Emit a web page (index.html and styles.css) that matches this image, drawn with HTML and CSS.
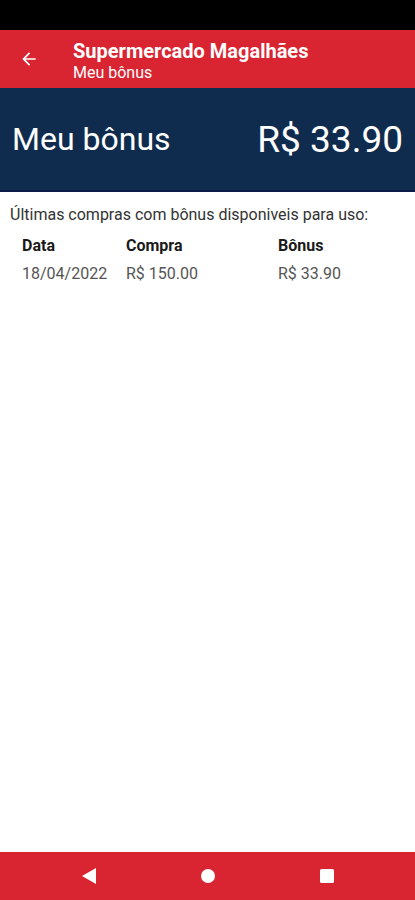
FILE: index.html
```html
<!DOCTYPE html>
<html lang="pt-BR">
<head>
    <meta charset="UTF-8">
    <meta name="viewport" content="width=device-width, initial-scale=1.0">
    <title>Meu bônus</title>
    <link rel="stylesheet" href="styles.css">
</head>
<body>
    <div class="status-bar"></div>

    <header class="app-bar">
        <button class="back-btn" aria-label="Voltar">
            <svg width="20" height="20" viewBox="0 0 24 24">
                <path d="M20 11H7.83l5.59-5.59L12 4l-8 8 8 8 1.41-1.41L7.83 13H20v-2z" fill="#fff"/>
            </svg>
        </button>
        <div class="titles">
            <div class="title">Supermercado Magalhães</div>
            <div class="subtitle">Meu bônus</div>
        </div>
    </header>

    <section class="bonus-banner">
        <span class="bonus-label">Meu bônus</span>
        <span class="bonus-value">R$ 33.90</span>
    </section>

    <main class="content">
        <p class="intro">Últimas compras com bônus disponiveis para uso:</p>
        <div class="purchases">
            <div class="cell head">Data</div>
            <div class="cell head">Compra</div>
            <div class="cell head">Bônus</div>
            <div class="cell">18/04/2022</div>
            <div class="cell">R$ 150.00</div>
            <div class="cell">R$ 33.90</div>
        </div>
    </main>

    <nav class="nav-bar">
        <svg width="16" height="18" viewBox="0 0 16 18"><path d="M15 1v16L1 9z" fill="#fff"/></svg>
        <svg width="16" height="16" viewBox="0 0 16 16"><circle cx="8" cy="8" r="7" fill="#fff"/></svg>
        <svg width="16" height="16" viewBox="0 0 16 16"><rect x="1" y="1" width="14" height="14" rx="1.5" fill="#fff"/></svg>
    </nav>
</body>
</html>
```

FILE: styles.css
```css
body {
    margin: 0;
    height: 100vh;
    display: flex;
    flex-direction: column;
    font-family: Roboto, "Liberation Sans", sans-serif;
    background-color: #fff;
}
.status-bar {
    height: 30px;
    background-color: #000;
}
.app-bar {
    height: 58px;
    background-color: #d92431;
    display: flex;
    align-items: center;
    color: #fff;
}
.back-btn {
    width: 58px;
    height: 58px;
    padding: 0;
    border: none;
    background: none;
    display: flex;
    align-items: center;
    justify-content: center;
}
.titles {
    margin-left: 15px;
    margin-top: 3px;
}
.title {
    font-size: 20px;
    font-weight: 700;
    line-height: 24px;
}
.subtitle {
    font-size: 16px;
    line-height: 20px;
}
.bonus-banner {
    height: 102px;
    background-color: #0f2c4f;
    border-bottom: 2px solid #0a1c45;
    display: flex;
    align-items: center;
    justify-content: space-between;
    padding: 0 12px;
    color: #fff;
}
.bonus-label {
    font-size: 32px;
}
.bonus-value {
    font-size: 37px;
}
.content {
    flex: 1;
    padding: 12px 10px 0;
}
.intro {
    margin: 0;
    font-size: 16px;
    line-height: 22px;
    color: #333;
}
.purchases {
    display: grid;
    grid-template-columns: 104px 152px 1fr;
    padding: 6px 12px 0;
}
.cell {
    font-size: 16px;
    line-height: 28px;
    color: #555;
}
.cell.head {
    font-weight: 700;
    color: #1a1a1a;
}
.nav-bar {
    height: 48px;
    background-color: #d92431;
    display: flex;
    align-items: center;
    justify-content: center;
    gap: 103px;
}
```
